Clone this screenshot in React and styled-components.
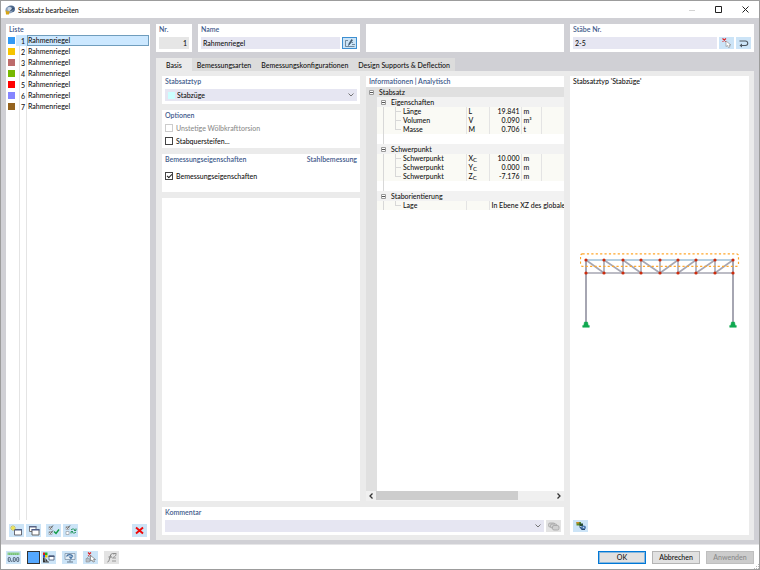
import React, { useState } from 'react';
import styled, { createGlobalStyle, css } from 'styled-components';

const colors = {
  frame: '#9c9c9c',
  body: '#d0d0d5',
  page: '#ebebeb',
  tab: '#dcdcdc',
  field: '#e6e6f2',
  tool: '#cce4f7',
  title: '#3f5b8c',
  text: '#111',
  muted: '#8c8c8c',
  line: '#e4e4e4',
};

const GlobalStyle = createGlobalStyle`
  *, *::before, *::after {
    box-sizing: border-box;
  }
  body {
    margin: 0;
    background: #fff;
    color: ${colors.text};
    font: 500 7px/10px Lato, 'Open Sans', sans-serif;
  }
  button, input, select {
    margin: 0;
    padding: 0;
    border: 0;
    border-radius: 0;
    color: inherit;
    font: inherit;
  }
  svg {
    display: block;
    flex: none;
  }
`;

const Window = styled.div`
  display: flex;
  flex-direction: column;
  min-height: 100vh;
  border: 1px solid ${colors.frame};
`;

const TitleBar = styled.header`
  display: flex;
  align-items: center;
  justify-content: space-between;
  height: 17px;
  padding: 0 0 0 4px;
`;

const WindowTitle = styled.h1`
  display: flex;
  align-items: center;
  gap: 3px;
  margin: 0;
  font-size: 7px;
  font-weight: 500;
`;

const WindowControls = styled.div`
  display: flex;
`;

const WindowButton = styled.button`
  display: grid;
  place-items: center;
  width: 27px;
  height: 17px;
  background: none;
  color: ${({ disabled }) => (disabled ? '#d4d4d4' : '#222')};
`;

const Body = styled.main`
  display: grid;
  flex: 1;
  grid-template-columns: 144px minmax(0, 1fr);
  gap: 6px;
  padding: 6px 5px 4px;
  background: ${colors.body};
`;

const Content = styled.div`
  display: flex;
  flex-direction: column;
  gap: 6px;
  min-width: 0;
`;

const HeaderRow = styled.div`
  display: grid;
  grid-template-columns: 36px minmax(0, 162fr) minmax(0, 198fr) minmax(0, 184fr);
  gap: 6px;
`;

const Panel = styled.section`
  display: flex;
  flex-direction: column;
  min-width: 0;
  padding: 0 3px 3px;
  background: #fff;
  ${({ $grow }) => $grow && 'flex: 1;'}
`;

const PanelTitle = styled.h2`
  display: flex;
  justify-content: space-between;
  margin: 0;
  padding-bottom: 1px;
  color: ${colors.title};
  font-size: 7px;
  font-weight: 600;
`;

const FieldRow = styled.div`
  display: flex;
  gap: 2px;
  margin-top: 2px;
`;

const TextInput = styled.input`
  flex: 1;
  min-width: 0;
  width: 100%;
  height: 12px;
  padding: 0 2px;
  background: ${({ readOnly }) => (readOnly ? '#e6e6e6' : colors.field)};
  text-align: ${({ $right }) => ($right ? 'right' : 'left')};
`;

const SelectBox = styled.div`
  display: flex;
  flex: 1;
  align-items: center;
  gap: 2px;
  min-width: 0;
  height: 12px;
  padding: 0 3px;
  background: ${colors.field};
  color: #555;
`;

const Select = styled.select`
  flex: 1;
  min-width: 0;
  height: 12px;
  appearance: none;
  background: none;
  color: ${colors.text};
`;

const Swatch = styled.span`
  width: 7px;
  height: 7px;
  background: ${({ $color }) => $color};
`;

const ToolButton = styled.button`
  display: grid;
  flex: none;
  place-items: center;
  width: 15px;
  height: ${({ $short }) => ($short ? 12 : 13)}px;
  background: ${({ disabled }) => (disabled ? '#e3e3e3' : colors.tool)};
  ${({ $pressed }) =>
    $pressed &&
    css`
      border: 1px solid #3d8fd1;
    `}
`;

const ItemTable = styled.ul`
  display: flex;
  flex: 1;
  flex-direction: column;
  margin: 0 -2px 0 -3px;
  padding: 0;
  list-style: none;
  background: linear-gradient(${colors.line}, ${colors.line}) 13px 0 / 1px 100% no-repeat,
    linear-gradient(${colors.line}, ${colors.line}) 20px 0 / 1px 100% no-repeat;
`;

const ItemName = styled.span`
  margin-left: 2px;
  border: 1px solid transparent;
  line-height: 9px;
`;

const ItemButton = styled.button`
  display: grid;
  grid-template-columns: 7px 10px 1fr;
  align-items: center;
  width: 100%;
  height: 11px;
  padding-left: 2px;
  background: none;
  text-align: left;
  ${({ $selected }) =>
    $selected &&
    css`
      background: linear-gradient(#cce8ff, #cce8ff) 10px 0 no-repeat;
      ${ItemName} {
        border-color: #6f9dbd;
      }
    `}
`;

const ItemNumber = styled.span`
  text-align: right;
`;

const ItemTools = styled.div`
  display: flex;
  gap: 2px;
  margin-top: 4px;
`;

const Gap = styled.span`
  width: 1px;
  ${({ $auto }) => $auto && 'flex: 1;'}
`;

const Tabs = styled.div`
  display: flex;
`;

const Tab = styled.button`
  height: 13px;
  padding: ${({ $active }) => ($active ? '0 10px' : '0 5px')};
  background: ${({ $active }) => ($active ? colors.page : colors.tab)};
`;

const Page = styled.div`
  display: grid;
  flex: 1;
  grid-template-columns: minmax(0, 198fr) minmax(0, 198fr) minmax(0, 179fr);
  grid-template-rows: 1fr auto;
  gap: 6px;
  padding: 5px 5px 5px 6px;
  background: ${colors.page};
`;

const TabArea = styled.div`
  display: flex;
  flex: 1;
  flex-direction: column;
`;

const Column = styled.div`
  display: flex;
  flex-direction: column;
  gap: 6px;
  min-width: 0;
`;

const OptionPanel = styled(Panel)`
  padding-bottom: 0;
`;

const CommentPanel = styled(Panel)`
  grid-column: 1 / 3;
  grid-row: 2;
`;

const PreviewPanel = styled(Panel)`
  grid-column: 3;
  grid-row: 1 / 3;
`;

const CheckRow = styled.div`
  display: flex;
  align-items: center;
  gap: 3px;
  height: 13px;
  color: ${({ $disabled }) => ($disabled ? colors.muted : colors.text)};
`;

const CheckList = styled.div`
  padding: ${({ $spaced }) => ($spaced ? '4px 0 10px' : '0 0 1px')};
`;

const Checkbox = styled.input`
  display: grid;
  place-items: center;
  width: 8px;
  height: 8px;
  border: 1px solid #444;
  appearance: none;
  background: #fff;
  &:disabled {
    border-color: #ccc;
  }
  &:checked::before {
    content: '';
    width: 5px;
    height: 3px;
    margin-top: -1px;
    border: solid #222;
    border-width: 0 0 1px 1px;
    transform: rotate(-45deg);
  }
`;

const InfoPanel = styled(Panel)`
  flex: 1;
  padding: 0;
`;

const InfoTitle = styled(PanelTitle)`
  padding-left: 3px;
`;

const InfoScroll = styled.div`
  flex: 1;
  overflow: hidden;
  background: linear-gradient(to right, #e0e0e0 11px, #fff 11px);
`;

const InfoTable = styled.table`
  width: 100%;
  border-collapse: collapse;
  table-layout: fixed;
  line-height: 9px;
  th,
  td {
    overflow: hidden;
    padding: 0 0 0 2px;
    font-weight: 500;
    text-align: left;
    white-space: nowrap;
  }
`;

const rowKinds = {
  root: css`
    height: 10px;
    background: #e0e0e0;
  `,
  group: css`
    height: 10px;
    background: linear-gradient(to right, #e0e0e0 11px, #f2f2f2 11px);
  `,
  value: css`
    height: 9px;
    background: linear-gradient(to right, #e0e0e0 11px, #fafaf5 11px);
    td {
      border-left: 1px solid ${colors.line};
    }
  `,
  blank: css`
    height: 10px;
    background: linear-gradient(#d8d8d8, #d8d8d8) 17px 0 / 1px 100% no-repeat;
  `,
};

const InfoRow = styled.tr`
  ${({ $kind }) => rowKinds[$kind]}
  th:first-child {
    padding: 0;
  }
`;

const TreeCell = styled.div`
  display: flex;
  align-items: center;
  height: ${({ $tall }) => ($tall ? 10 : 9)}px;
  padding-left: ${({ $level }) => $level * 12 + 3}px;
  gap: 5px;
  ${({ $level }) =>
    $level === 2 &&
    css`
      padding-left: 37px;
      background: linear-gradient(#d8d8d8, #d8d8d8) 17px 0 / 1px 100% no-repeat,
        linear-gradient(#d8d8d8, #d8d8d8) 29px 0 / 1px ${({ $last }) => ($last ? '5px' : '100%')} no-repeat,
        linear-gradient(#d8d8d8, #d8d8d8) 29px 4px / 6px 1px no-repeat;
    `}
`;

const Amount = styled.td`
  && {
    padding-right: 1px;
    text-align: right;
  }
`;

const Sub = styled.sub`
  font-size: 6px;
  line-height: 0;
  vertical-align: -1px;
`;

const ScrollBar = styled.div`
  display: flex;
  align-items: stretch;
  height: 10px;
  background: #f0f0f0;
`;

const ScrollArrow = styled.button`
  display: grid;
  place-items: center;
  width: 10px;
  background: none;
`;

const ScrollTrack = styled.div`
  flex: 1;
`;

const ScrollThumb = styled.div`
  width: 80%;
  height: 9px;
  background: #cdcdcd;
`;

const PreviewTitle = styled.p`
  margin: 0;
  padding-bottom: 1px;
`;

const Canvas = styled.div`
  display: flex;
  flex: 1;
  align-items: center;
  justify-content: center;
  padding-bottom: 26px;
`;

const Footer = styled.footer`
  display: flex;
  align-items: center;
  gap: 6px;
  height: 25px;
  padding: 0 5px;
  border-top: 1px solid #e6e6e8;
`;

const FooterTools = styled.div`
  display: flex;
  flex: 1;
  gap: 6px;
`;

const ColorTools = styled.div`
  display: flex;
  gap: 1px;
`;

const ColorButton = styled.button`
  width: 13px;
  height: 13px;
  border: 1px solid #333;
  background: #55a8ff;
`;

const DialogButton = styled.button`
  width: 48px;
  height: 13px;
  border: 1px solid ${({ $primary }) => ($primary ? '#0078d7' : '#b4b4b4')};
  background: #e1e1e1;
  line-height: 9px;
  &:disabled {
    border-color: #bfbfbf;
    background: #ccc;
    color: #8a8a8a;
  }
  ${({ $primary }) => $primary && 'box-shadow: inset 0 0 0 1px rgba(0, 120, 215, 0.4);'}
`;

const ResizeGrip = styled.svg`
  align-self: flex-end;
  margin: 0 -5px 0 -6px;
`;

const AppIcon = () => (
  <svg width="10" height="10" viewBox="0 0 20 20">
    <ellipse cx="12" cy="8" rx="8" ry="7" fill="#4d688c" />
    <ellipse cx="8" cy="10" rx="7" ry="7" fill="#8ba0bc" />
    <ellipse cx="9" cy="8" rx="4" ry="4" fill="#c7d4e2" />
    <path d="M1 10l4 3 4-1-1 7H2z" fill="#d9a514" />
    <path d="M11 12l6-6" stroke="#18304f" strokeWidth="2" />
  </svg>
);

const Chevron = () => (
  <svg width="6" height="4" viewBox="0 0 6 4" fill="none" stroke="#666" strokeWidth="0.9">
    <path d="M0.5 0.5L3 3L5.5 0.5" />
  </svg>
);

const EditIcon = () => (
  <svg width="12" height="9" viewBox="0 0 24 18" fill="none" stroke="#4b6478" strokeWidth="1.4">
    <path d="M8 3H3v12h18" />
    <path d="M9 13l1-4 5-8 2 1-5 8z" fill="#32495c" />
    <path d="M15 7h3M16 11h6" />
  </svg>
);

const PickIcon = () => (
  <svg width="12" height="10" viewBox="0 0 24 20">
    <path d="M3 1l7 6M10 1L3 7" stroke="#e02020" strokeWidth="2.2" />
    <path d="M10 6v11l3-2 2 4 3-1-2-4h4z" fill="#fff" stroke="#888" strokeWidth="1.2" />
  </svg>
);

const ReturnIcon = () => (
  <svg width="11" height="9" viewBox="0 0 22 18" fill="none" stroke="#4c5660" strokeWidth="2.2">
    <path d="M3 4h12a4.500 4.500 0 0 1 0 9H6" />
    <path d="M8 9l-5 4 5 4z" fill="#4c5660" stroke="none" />
  </svg>
);

const NewIcon = () => (
  <svg width="13" height="11" viewBox="0 0 26 22">
    <path d="M9 9h14v11H9z" fill="#fff" stroke="#5a5a64" strokeWidth="1.8" />
    <path d="M8 8h16v3H8z" fill="#4c5c88" />
    <path d="M6 0v12M0 6h12M2 2l8 8M10 2l-8 8" stroke="#cdb820" strokeWidth="1.4" />
    <circle cx="6" cy="6" r="3" fill="#f5e642" />
  </svg>
);

const CopyIcon = () => (
  <svg width="12" height="11" viewBox="0 0 24 22">
    <path d="M3 3h13v10H3z" fill="#fff" stroke="#666" strokeWidth="1.8" />
    <path d="M2 2h15v3H2z" fill="#5a6484" />
    <path d="M8 9h14v11H8z" fill="#fff" stroke="#555" strokeWidth="1.8" />
    <path d="M7 8h16v3H7z" fill="#4c5c88" />
  </svg>
);

const CheckAllIcon = ({ invert }) => (
  <svg width="12" height="11" viewBox="0 0 24 22" fill="none">
    <path d="M2 3h6v6H2zM2 13h6v6H2z" fill="#fff" stroke="#8d959d" strokeWidth="1.3" />
    <path d="M3 4l2 3 5-6" stroke="#444" strokeWidth="1.7" />
    {invert ? (
      <path d="M12 10c2-3 7-3 9 1M22 14c-2 3-7 3-9-1M22 7v4h-4M12 17v-4h4" stroke="#2a9a64" strokeWidth="2" />
    ) : (
      <>
        <path d="M3 14l2 3 5-6" stroke="#444" strokeWidth="1.7" />
        <path d="M12 13l4 4 6-8" stroke="#119c45" strokeWidth="2.8" />
      </>
    )}
  </svg>
);

const DeleteIcon = () => (
  <svg width="9" height="9" viewBox="0 0 18 18" stroke="#f00808" strokeWidth="3.8">
    <path d="M2 3l14 12M16 3L2 15" />
  </svg>
);

const UnitsIcon = () => (
  <svg width="13" height="11" viewBox="0 0 26 22">
    <path d="M1 1h24v5H1z" fill="#8ccf8c" />
    <path d="M5 3v3M9 3v3M13 3v3M17 3v3M21 3v3" stroke="#5ba868" />
    <g fill="none" stroke="#3a4c62" strokeWidth="1.8">
      <rect x="2.5" y="11" width="4" height="8" rx="1.5" />
      <rect x="12.5" y="11" width="4" height="8" rx="1.5" />
      <rect x="19.5" y="11" width="4" height="8" rx="1.5" />
      <path d="M9.5 17v3" />
    </g>
  </svg>
);

const DisplayIcon = () => (
  <svg width="13" height="11" viewBox="0 0 26 22">
    <path d="M2 1h4v5H2z" fill="#e01818" />
    <path d="M6 1h5v5H6z" fill="#20b030" />
    <path d="M2 6h4v5H2z" fill="#2848d8" />
    <path d="M6 6h5v5H6z" fill="#e8cc10" />
    <path d="M2 11h3l1 9H2zM7 12l5 7H7z" fill="#333" />
    <path d="M2 20h12" stroke="#222" strokeWidth="1.6" />
    <path d="M14 8h10v8H14z" fill="#fff" stroke="#4a5878" strokeWidth="1.6" />
    <path d="M13 7h12v3H13z" fill="#4a5878" />
  </svg>
);

const ViewIcon = () => (
  <svg width="12" height="11" viewBox="0 0 24 22">
    <path d="M2 3h20v12H2z" fill="#e4eef6" stroke="#8296aa" strokeWidth="1.6" />
    <path d="M5 9c2-5 10-5 13 0" fill="none" stroke="#3f6ea0" strokeWidth="2.2" />
    <path d="M9 9h9l-4 6z" fill="#4a78a8" />
    <path d="M12 16v3M6 20h12" stroke="#66788c" strokeWidth="2" />
  </svg>
);

const SelectObjectIcon = () => (
  <svg width="12" height="11" viewBox="0 0 24 22">
    <path d="M6 1l6 6M12 1L6 7" stroke="#e02020" strokeWidth="2.2" />
    <path d="M2 13h7v7H2z" fill="#b8c0c8" stroke="#808488" />
    <path d="M4 12l4-4 3 4" fill="none" stroke="#888" strokeWidth="1.3" />
    <path d="M11 7v11l3-2 2 4 3-1-2-4h4z" fill="#fff" stroke="#666" strokeWidth="1.3" />
  </svg>
);

const FormulaIcon = () => (
  <svg width="12" height="11" viewBox="0 0 24 22" fill="none" stroke="#808080" strokeWidth="2">
    <path d="M3 20c5 0 4-17 10-17M5 10h7" />
    <path d="M14 5c2-3 7-2 6 1-1 3-5 4-7 6h7M12 18h8M13 3h8" strokeWidth="1.5" />
  </svg>
);

const CommentIcon = () => (
  <svg width="12" height="9" viewBox="0 0 24 18" fill="#d0d0d0" stroke="#a0a0a0" strokeWidth="1.5">
    <rect x="1" y="2" width="13" height="8" rx="3" />
    <rect x="5" y="4" width="13" height="8" rx="3" />
    <rect x="9" y="7" width="13" height="9" rx="3" />
  </svg>
);

const RenderIcon = () => (
  <svg width="12" height="10" viewBox="0 0 24 20">
    <path d="M3 2h9v7H3z" fill="#5d8c2b" />
    <path d="M3 2h5v3H3z" fill="#d48a25" />
    <path d="M9 5h7v5H9z" fill="#254a35" />
    <ellipse cx="17" cy="13" rx="5" ry="4" fill="#4a78b0" />
    <path d="M9 11l5 6h6" stroke="#24466e" strokeWidth="2.2" fill="none" />
    <circle cx="17" cy="13" r="1.5" fill="#c4d8ec" />
  </svg>
);

const ExpandIcon = () => (
  <svg width="5" height="5" viewBox="0 0 5 5" fill="#fff" stroke="#9a9a9a">
    <path d="M0.5 0.5h4v4h-4z" />
    <path d="M1 2.5h3" stroke="#555" />
  </svg>
);

const nodes = [6, 24, 43, 61, 80, 98, 116, 135, 153];

const TrussDrawing = () => (
  <svg width="160" height="76" viewBox="0 0 160 76" role="img" aria-label="Stabzüge">
    <g fill="none" stroke="#a6a6b2" strokeWidth="1.6">
      <path d="M6 20H153" />
      <path d="M6 7V70M153 7V70" strokeWidth="2" />
      {nodes.slice(1, -1).map(x => (
        <path key={x} d={`M${x} 7V20`} />
      ))}
      {nodes.slice(0, -1).map((x, i) => (
        <path key={x} d={i < 4 ? `M${x} 7L${nodes[i + 1]} 20` : `M${x} 20L${nodes[i + 1]} 7`} />
      ))}
    </g>
    <path d="M6 7H153" stroke="#9fc0d8" strokeWidth="1.4" />
    <rect x="0.5" y="0.8" width="158" height="12.5" rx="2" fill="none" stroke="#ffa62b" strokeWidth="1.2" strokeDasharray="2.2 2.2" />
    {nodes.map(x => (
      <g key={x} fill="#cc2b0c">
        <circle cx={x} cy="7" r="1.6" />
        <circle cx={x} cy="20" r="1.6" />
      </g>
    ))}
    {[6, 153].map(x => (
      <path key={x} d={`M${x - 1.5} 69h3l0.8 3.5h1v1.8h-6.6v-1.8h1z`} fill="#10a850" stroke="#10a850" strokeWidth="0.5" />
    ))}
  </svg>
);

const items = ['#3399f3', '#f5c400', '#bd6b6b', '#77b800', '#ff0000', '#8585ff', '#94631f'];

const tabs = ['Basis', 'Bemessungsarten', 'Bemessungskonfigurationen', 'Design Supports & Deflection'];

const groups = [
  {
    name: 'Eigenschaften',
    rows: [
      { name: 'Länge', symbol: 'L', value: '19.841', unit: 'm' },
      { name: 'Volumen', symbol: 'V', value: '0.090', unit: 'm³' },
      { name: 'Masse', symbol: 'M', value: '0.706', unit: 't' },
    ],
  },
  {
    name: 'Schwerpunkt',
    rows: [
      { name: 'Schwerpunkt', symbol: 'X', sub: 'C', value: '10.000', unit: 'm' },
      { name: 'Schwerpunkt', symbol: 'Y', sub: 'C', value: '0.000', unit: 'm' },
      { name: 'Schwerpunkt', symbol: 'Z', sub: 'C', value: '-7.176', unit: 'm' },
    ],
  },
  {
    name: 'Staborientierung',
    rows: [{ name: 'Lage', text: 'In Ebene XZ des globale' }],
  },
];

const ItemList = () => {
  const [selected, setSelected] = useState(0);
  return (
    <Panel>
      <PanelTitle>Liste</PanelTitle>
      <ItemTable>
        {items.map((color, i) => (
          <li key={color}>
            <ItemButton $selected={i === selected} onClick={() => setSelected(i)}>
              <Swatch $color={color} />
              <ItemNumber>{i + 1}</ItemNumber>
              <ItemName>Rahmenriegel</ItemName>
            </ItemButton>
          </li>
        ))}
      </ItemTable>
      <ItemTools>
        <ToolButton aria-label="Neu"><NewIcon /></ToolButton>
        <ToolButton aria-label="Kopieren"><CopyIcon /></ToolButton>
        <Gap />
        <ToolButton aria-label="Alle auswählen"><CheckAllIcon /></ToolButton>
        <ToolButton aria-label="Auswahl umkehren"><CheckAllIcon invert /></ToolButton>
        <Gap $auto />
        <ToolButton aria-label="Löschen"><DeleteIcon /></ToolButton>
      </ItemTools>
    </Panel>
  );
};

const Header = () => (
  <HeaderRow>
    <Panel>
      <PanelTitle as="label" htmlFor="number">Nr.</PanelTitle>
      <FieldRow>
        <TextInput id="number" $right readOnly value="1" />
      </FieldRow>
    </Panel>
    <Panel>
      <PanelTitle as="label" htmlFor="name">Name</PanelTitle>
      <FieldRow>
        <TextInput id="name" defaultValue="Rahmenriegel" />
        <ToolButton $short $pressed aria-label="Name bearbeiten"><EditIcon /></ToolButton>
      </FieldRow>
    </Panel>
    <Panel />
    <Panel>
      <PanelTitle as="label" htmlFor="members">Stäbe Nr.</PanelTitle>
      <FieldRow>
        <TextInput id="members" defaultValue="2-5" />
        <ToolButton $short aria-label="Auswählen"><PickIcon /></ToolButton>
        <ToolButton $short aria-label="Umkehren"><ReturnIcon /></ToolButton>
      </FieldRow>
    </Panel>
  </HeaderRow>
);

const Settings = () => (
  <Column>
    <Panel>
      <PanelTitle as="label" htmlFor="type">Stabsatztyp</PanelTitle>
      <FieldRow>
        <SelectBox>
          <Swatch $color="#ccffff" />
          <Select id="type">
            <option>Stabzüge</option>
          </Select>
          <Chevron />
        </SelectBox>
      </FieldRow>
    </Panel>
    <OptionPanel>
      <PanelTitle>Optionen</PanelTitle>
      <CheckList>
        <CheckRow $disabled>
          <Checkbox type="checkbox" id="warping" disabled />
          <label htmlFor="warping">Unstetige Wölbkrafttorsion</label>
        </CheckRow>
        <CheckRow>
          <Checkbox type="checkbox" id="stiffeners" />
          <label htmlFor="stiffeners">Stabquersteifen...</label>
        </CheckRow>
      </CheckList>
    </OptionPanel>
    <OptionPanel>
      <PanelTitle>
        <span>Bemessungseigenschaften</span>
        <span>Stahlbemessung</span>
      </PanelTitle>
      <CheckList $spaced>
        <CheckRow>
          <Checkbox type="checkbox" id="design" defaultChecked />
          <label htmlFor="design">Bemessungseigenschaften</label>
        </CheckRow>
      </CheckList>
    </OptionPanel>
    <Panel $grow />
  </Column>
);

const InfoGroup = ({ group, last }) => (
  <tbody>
    <InfoRow $kind="group">
      <th colSpan={5} scope="rowgroup">
        <TreeCell $tall $level={1}>
          <ExpandIcon />
          {group.name}
        </TreeCell>
      </th>
    </InfoRow>
    {group.rows.map((row, i) => (
      <InfoRow key={i} $kind="value">
        <th scope="row">
          <TreeCell $level={2} $last={i === group.rows.length - 1}>
            {row.name}
          </TreeCell>
        </th>
        <td>
          {row.symbol}
          {row.sub && <Sub>{row.sub}</Sub>}
        </td>
        {row.text ? (
          <td colSpan={3}>{row.text}</td>
        ) : (
          <>
            <Amount>{row.value}</Amount>
            <td>{row.unit}</td>
            <td />
          </>
        )}
      </InfoRow>
    ))}
    {!last && (
      <InfoRow $kind="blank">
        <td colSpan={5} />
      </InfoRow>
    )}
  </tbody>
);

const Information = () => (
  <Column>
    <InfoPanel>
      <InfoTitle>Informationen | Analytisch</InfoTitle>
      <InfoScroll>
        <InfoTable>
          <colgroup>
            <col style={{ width: 100 }} />
            <col style={{ width: 23 }} />
            <col style={{ width: 32 }} />
            <col style={{ width: 20 }} />
            <col />
          </colgroup>
          <thead>
            <InfoRow $kind="root">
              <th colSpan={5}>
                <TreeCell $tall $level={0}>
                  <ExpandIcon />
                  Stabsatz
                </TreeCell>
              </th>
            </InfoRow>
          </thead>
          {groups.map((group, i) => (
            <InfoGroup key={group.name} group={group} last={i === groups.length - 1} />
          ))}
        </InfoTable>
      </InfoScroll>
      <ScrollBar>
        <ScrollArrow aria-label="Nach links">
          <svg width="4" height="6" viewBox="0 0 4 6" fill="none" stroke="#333" strokeWidth="1.3">
            <path d="M3.5 0.5L1 3L3.5 5.5" />
          </svg>
        </ScrollArrow>
        <ScrollTrack>
          <ScrollThumb />
        </ScrollTrack>
        <ScrollArrow aria-label="Nach rechts">
          <svg width="4" height="6" viewBox="0 0 4 6" fill="none" stroke="#333" strokeWidth="1.3">
            <path d="M0.5 0.5L3 3L0.5 5.5" />
          </svg>
        </ScrollArrow>
      </ScrollBar>
    </InfoPanel>
  </Column>
);

const App = () => {
  const [activeTab, setActiveTab] = useState(tabs[0]);
  return (
    <>
      <GlobalStyle />
      <Window>
        <TitleBar>
          <WindowTitle>
            <AppIcon />
            Stabsatz bearbeiten
          </WindowTitle>
          <WindowControls>
            <WindowButton disabled aria-label="Minimieren">
              <svg width="6" height="6" viewBox="0 0 6 6" stroke="currentColor">
                <path d="M0 3.5h6" />
              </svg>
            </WindowButton>
            <WindowButton aria-label="Maximieren">
              <svg width="7" height="7" viewBox="0 0 7 7" fill="none" stroke="currentColor">
                <path d="M0.5 0.5h6v6h-6z" />
              </svg>
            </WindowButton>
            <WindowButton aria-label="Schließen">
              <svg width="7" height="7" viewBox="0 0 7 7" stroke="currentColor">
                <path d="M0.5 0.5l6 6M6.5 0.5l-6 6" />
              </svg>
            </WindowButton>
          </WindowControls>
        </TitleBar>
        <Body>
          <ItemList />
          <Content>
            <Header />
            <TabArea>
              <Tabs role="tablist">
                {tabs.map(tab => (
                  <Tab
                    key={tab}
                    role="tab"
                    aria-selected={tab === activeTab}
                    $active={tab === activeTab}
                    onClick={() => setActiveTab(tab)}
                  >
                    {tab}
                  </Tab>
                ))}
              </Tabs>
              <Page>
                <Settings />
                <Information />
                <CommentPanel>
                  <PanelTitle as="label" htmlFor="comment">Kommentar</PanelTitle>
                  <FieldRow>
                    <SelectBox>
                      <Select id="comment">
                        <option> </option>
                      </Select>
                      <Chevron />
                    </SelectBox>
                    <ToolButton $short disabled aria-label="Kommentare"><CommentIcon /></ToolButton>
                  </FieldRow>
                </CommentPanel>
                <PreviewPanel>
                  <PreviewTitle>Stabsatztyp 'Stabzüge'</PreviewTitle>
                  <Canvas>
                    <TrussDrawing />
                  </Canvas>
                  <ToolButton $short aria-label="Darstellung"><RenderIcon /></ToolButton>
                </PreviewPanel>
              </Page>
            </TabArea>
          </Content>
        </Body>
        <Footer>
          <FooterTools>
            <ToolButton aria-label="Einheiten"><UnitsIcon /></ToolButton>
            <ColorTools>
              <ColorButton aria-label="Farbe" />
              <ToolButton aria-label="Anzeige"><DisplayIcon /></ToolButton>
            </ColorTools>
            <ToolButton aria-label="Ansicht"><ViewIcon /></ToolButton>
            <ToolButton aria-label="Objekt wählen"><SelectObjectIcon /></ToolButton>
            <ToolButton disabled aria-label="Formel"><FormulaIcon /></ToolButton>
          </FooterTools>
          <DialogButton $primary>OK</DialogButton>
          <DialogButton>Abbrechen</DialogButton>
          <DialogButton disabled>Anwenden</DialogButton>
          <ResizeGrip width="5" height="5" viewBox="0 0 5 5" fill="#b8b8b8">
            <path d="M4 0h1v1h-1zM2 2h1v1h-1zM4 2h1v1h-1zM0 4h1v1h-1zM2 4h1v1h-1zM4 4h1v1h-1z" />
          </ResizeGrip>
        </Footer>
      </Window>
    </>
  );
};

export default App;
